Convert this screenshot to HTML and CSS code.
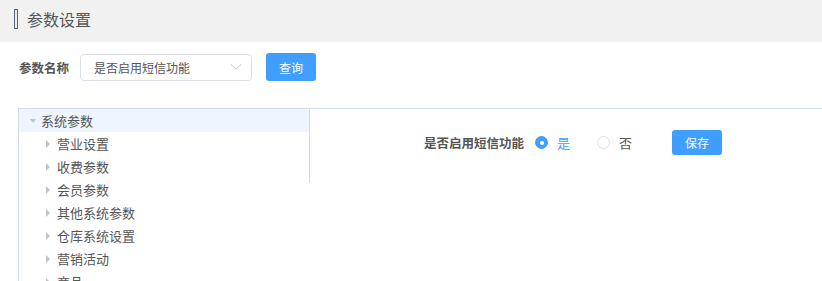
FILE: index.html
```html
<!DOCTYPE html>
<html lang="zh-CN">
<head>
  <meta charset="UTF-8" />
  <title>参数设置</title>
  <link rel="stylesheet" href="styles.css">
</head>
<body>
  <div class="page-header">
    <span class="mark"></span>
    <span class="page-title">参数设置</span>
  </div>

  <div class="search-row">
    <label class="search-label">参数名称</label>
    <div class="select">
      <span>是否启用短信功能</span>
      <svg class="chevron" width="12" height="8" viewBox="0 0 12 8"><path d="M1 1.5 L6 6 L11 1.5" fill="none" stroke="#c0c4cc" stroke-width="1"/></svg>
    </div>
    <button class="btn">查询</button>
  </div>

  <div class="panel">
    <div class="tree">
      <div class="tree-row root"><span class="caret down"></span>系统参数</div>
      <div class="tree-row child"><span class="caret"></span>营业设置</div>
      <div class="tree-row child"><span class="caret"></span>收费参数</div>
      <div class="tree-row child"><span class="caret"></span>会员参数</div>
      <div class="tree-row child"><span class="caret"></span>其他系统参数</div>
      <div class="tree-row child"><span class="caret"></span>仓库系统设置</div>
      <div class="tree-row child"><span class="caret"></span>营销活动</div>
      <div class="tree-row child"><span class="caret"></span>商品</div>
    </div>
    <div class="content">
      <div class="form-row">
        <span class="form-label">是否启用短信功能</span>
        <label class="radio checked"><span class="dot"></span>是</label>
        <label class="radio"><span class="dot"></span>否</label>
        <button class="btn save">保存</button>
      </div>
    </div>
  </div>
</body>
</html>
```

FILE: styles.css
```css
body {
  margin: 0;
  font-family: "Noto Sans CJK SC", "Liberation Sans", sans-serif;
  color: #555;
  background: #fff;
  overflow: hidden;
}

.page-header {
  height: 42px;
  background: #f1f1f1;
  display: flex;
  align-items: center;
}

.mark {
  width: 2px;
  height: 18px;
  border: 1px solid #56667c;
  background: #e9e9e9;
  margin-left: 14px;
  margin-top: -4px;
}

.page-title {
  font-size: 16px;
  margin-left: 9px;
  margin-top: -4px;
  color: #555;
}

.search-row {
  display: flex;
  align-items: center;
  margin-top: 11px;
  padding-left: 19px;
  height: 28px;
}

.search-label {
  font-size: 12.5px;
  font-weight: bold;
  color: #555;
  width: 61px;
}

.select {
  box-sizing: border-box;
  width: 172px;
  height: 27px;
  border: 1px solid #dcdfe6;
  border-radius: 4px;
  display: flex;
  align-items: center;
  justify-content: space-between;
  padding: 0 9px 0 13px;
  font-size: 12px;
  color: #555;
}

.btn {
  background: #409eff;
  color: #fff;
  border: none;
  border-radius: 3px;
  font-family: inherit;
  font-size: 12px;
  width: 50px;
  height: 28px;
  margin-left: 14px;
  padding: 0;
}

.panel {
  display: flex;
  margin-top: 27px;
  margin-left: 18px;
  border-top: 1px solid #d3dce6;
  border-left: 1px solid #d3dce6;
  align-items: flex-start;
}

.tree {
  width: 290px;
}

.tree-row {
  height: 23px;
  display: flex;
  align-items: center;
  font-size: 13px;
  color: #555;
}

.tree-row.root {
  background: #eef5fe;
  padding-left: 11px;
}

.tree-row.child {
  padding-left: 27px;
}

.caret {
  width: 0;
  height: 0;
  border-top: 4px solid transparent;
  border-bottom: 4px solid transparent;
  border-left: 4px solid #c0c4cc;
  margin-right: 7px;
}

.caret.down {
  border-left: 3px solid transparent;
  border-right: 3px solid transparent;
  border-top: 4px solid #c0c4cc;
  border-bottom: none;
  margin-right: 5px;
}

.content {
  flex: 1;
  height: 74px;
  border-left: 1px solid #d3dce6;
}

.form-row {
  display: flex;
  align-items: center;
  height: 25px;
  margin-top: 21px;
  padding-left: 114px;
}

.form-label {
  font-size: 12.5px;
  font-weight: bold;
  color: #555;
  margin-right: 11px;
}

.radio {
  display: flex;
  align-items: center;
  font-size: 13px;
  color: #555;
  margin-right: 27px;
}

.radio .dot {
  width: 11px;
  height: 11px;
  border: 1px solid #dcdfe6;
  border-radius: 50%;
  margin-right: 9px;
  box-sizing: content-box;
}

.radio.checked {
  color: #409eff;
}

.radio.checked .dot {
  background: #409eff;
  border-color: #409eff;
  position: relative;
}

.radio.checked .dot::after {
  content: "";
  position: absolute;
  width: 4px;
  height: 4px;
  background: #fff;
  border-radius: 50%;
  left: 3.5px;
  top: 3.5px;
}

.btn.save {
  height: 25px;
  margin-left: 13px;
}
```
